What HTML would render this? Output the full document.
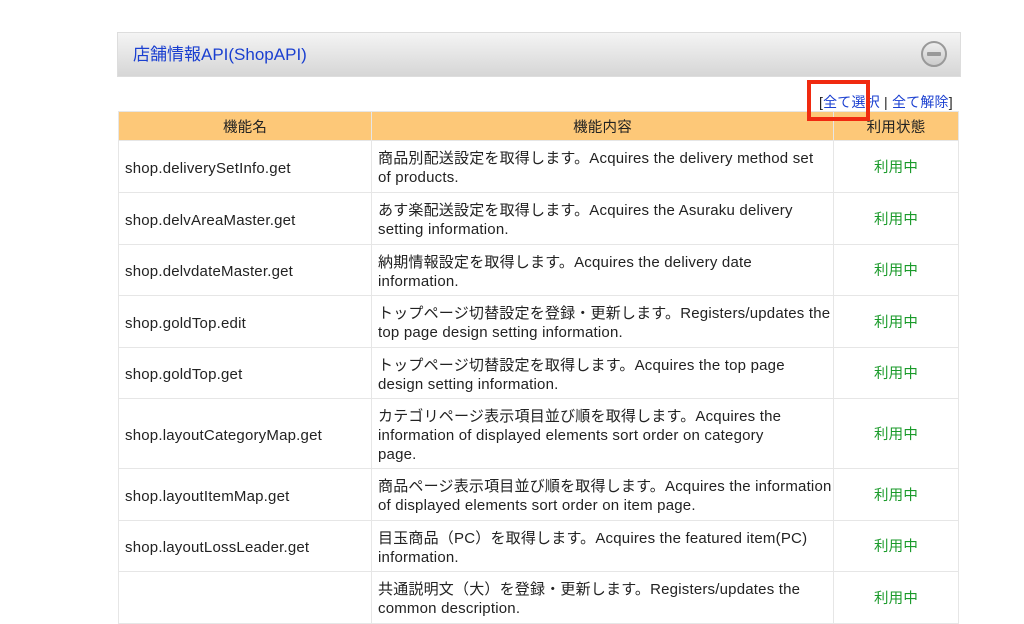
<!DOCTYPE html>
<html><head><meta charset="utf-8"><style>
body{margin:0;background:#fff;width:1024px;height:590px;overflow:hidden;position:relative;font-family:"Liberation Sans","Noto Sans CJK JP",sans-serif;}
.hd{position:absolute;left:117px;top:32px;width:842px;height:43px;border:1px solid #ddd;background:linear-gradient(#f4f4f4,#d6d6d6);}
.hd span{position:absolute;left:15px;top:12px;font-size:17px;color:#1a3fd0;line-height:20px;}
.ic{position:absolute;left:803px;top:8px;width:22px;height:22px;border:2px solid #999;border-radius:50%;background:linear-gradient(#eee,#ccc);}
.ic:after{content:"";position:absolute;left:4px;top:9px;width:14px;height:4px;background:#999;border-radius:1px;}
.links{position:absolute;left:819px;top:92px;font-size:14px;color:#222;letter-spacing:.2px;z-index:3}
.links a{color:#1a3fd0;text-decoration:none;}
.red{position:absolute;left:807px;top:80px;width:55px;height:33px;border:4px solid #f02a10;z-index:4}
table{position:absolute;left:118px;top:111px;border-collapse:collapse;width:841px;table-layout:fixed;font-size:15px;color:#222;letter-spacing:.2px;}
th{background:#fdc878;font-weight:normal;height:28px;border:1px solid #e6e6e6;padding:0;font-size:14.5px;}
td{border:1px solid #e6e6e6;padding:3px 6px 0;line-height:19px;white-space:nowrap;overflow:hidden;}
td.c{text-align:center;color:#1a9a2a;font-size:14.5px;}
</style></head><body>
<div class="hd"><span>店舗情報API(ShopAPI)</span><div class="ic"></div></div>
<div class="links">[<a>全て選択</a> | <a>全て解除</a>]</div>
<div class="red"></div>
<table>
<tr><th style="width:252px">機能名</th><th style="width:461px">機能内容</th><th>利用状態</th></tr>
<tr style="height:52px"><td>shop.deliverySetInfo.get</td><td>商品別配送設定を取得します。Acquires the delivery method set<br>of products.</td><td class="c">利用中</td></tr>
<tr style="height:52px"><td>shop.delvAreaMaster.get</td><td>あす楽配送設定を取得します。Acquires the Asuraku delivery<br>setting information.</td><td class="c">利用中</td></tr>
<tr style="height:51px"><td>shop.delvdateMaster.get</td><td>納期情報設定を取得します。Acquires the delivery date<br>information.</td><td class="c">利用中</td></tr>
<tr style="height:52px"><td>shop.goldTop.edit</td><td>トップページ切替設定を登録・更新します。Registers/updates the<br>top page design setting information.</td><td class="c">利用中</td></tr>
<tr style="height:51px"><td>shop.goldTop.get</td><td>トップページ切替設定を取得します。Acquires the top page<br>design setting information.</td><td class="c">利用中</td></tr>
<tr style="height:70px"><td>shop.layoutCategoryMap.get</td><td>カテゴリページ表示項目並び順を取得します。Acquires the<br>information of displayed elements sort order on category<br>page.</td><td class="c">利用中</td></tr>
<tr style="height:52px"><td>shop.layoutItemMap.get</td><td>商品ページ表示項目並び順を取得します。Acquires the information<br>of displayed elements sort order on item page.</td><td class="c">利用中</td></tr>
<tr style="height:51px"><td>shop.layoutLossLeader.get</td><td>目玉商品（PC）を取得します。Acquires the featured item(PC)<br>information.</td><td class="c">利用中</td></tr>
<tr style="height:52px"><td></td><td>共通説明文（大）を登録・更新します。Registers/updates the<br>common description.</td><td class="c">利用中</td></tr>
</table>
</body></html>
